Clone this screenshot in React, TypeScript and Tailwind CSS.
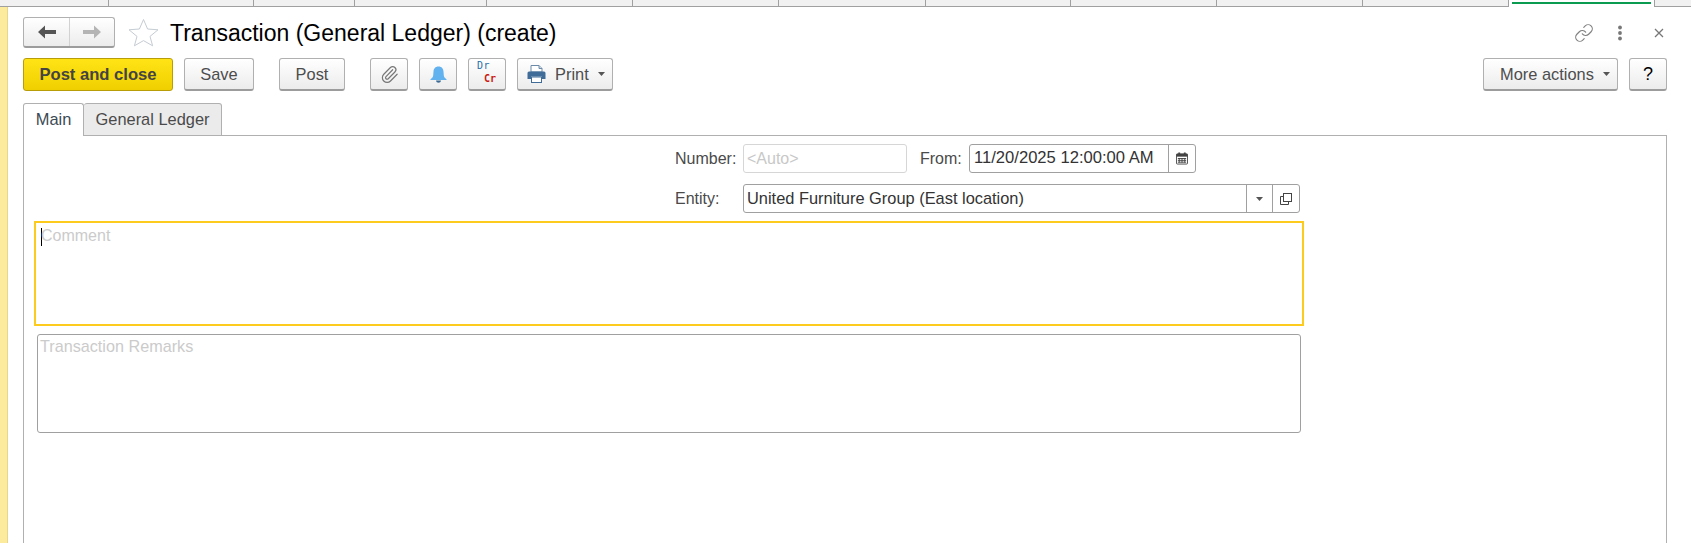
import React from "react";
import { Link, Paperclip } from "lucide-react";

const tabWidths = [109, 145, 101, 132, 146, 146, 147, 145, 146, 146, 146];
const btn =
  "h-[33px] flex items-center justify-center rounded-[3px] border border-[#b0b0b0] border-b-[#9c9c9c] border-b-2 bg-gradient-to-b from-white to-[#ececec] text-[16.4px] text-[#4d4d4d]";

function Caret() {
  return (
    <svg width="7" height="4" viewBox="0 0 7 4" className="shrink-0">
      <polygon points="0,0 7,0 3.5,4" fill="#555" />
    </svg>
  );
}

export default function App() {
  return (
    <div className="w-[1691px] h-[543px] overflow-hidden bg-white flex flex-col text-[16px] leading-none text-[#4a4a4a] [font-family:'Liberation_Sans',Arial,sans-serif]">
      <div className="h-[7px] shrink-0 flex border-b border-[#a0a0a0] bg-[#f1f1f1]">
        {tabWidths.map((w, i) => (
          <div key={i} style={{ width: w }} className="h-[6px] shrink-0 border-r border-[#a0a0a0]" />
        ))}
        <div className="w-[146px] h-[7px] shrink-0 bg-white border-r border-[#a0a0a0] px-[3px] pt-[2px]">
          <div className="h-[2px] bg-[#0a9a50]" />
        </div>
      </div>

      <div className="flex-1 flex min-h-0">
        <div className="w-[8px] shrink-0 bg-[#fdeb9d] border-r border-[#e8d68a]" />
        <div className="flex-1 flex flex-col pl-[15px] pr-[24px] pt-[10px] min-w-0">
          <div className="h-[31px] flex items-center shrink-0">
            <div className="w-[92px] h-[31px] flex rounded-[3px] border border-[#b0b0b0] border-b-2 border-b-[#9c9c9c] bg-gradient-to-b from-white to-[#ececec]">
              <div className="w-[46px] flex items-center justify-center border-r border-[#d2d2d2]">
                <svg width="18" height="14" viewBox="0 0 18 14">
                  <polygon points="0,7 7,0.5 7,5 18,5 18,9 7,9 7,13.5" fill="#555" />
                </svg>
              </div>
              <div className="flex-1 flex items-center justify-center">
                <svg width="18" height="14" viewBox="0 0 18 14">
                  <polygon points="18,7 11,0.5 11,5 0,5 0,9 11,9 11,13.5" fill="#b4b4b4" />
                </svg>
              </div>
            </div>
            <svg width="31" height="29" viewBox="0 0 31 29" className="ml-[13px]">
              <polygon
                points="15.5,1.5 19.6,11 30,11.8 22,18.4 24.6,27.8 15.5,22.6 6.4,27.8 9,18.4 1,11.8 11.4,11"
                fill="none"
                stroke="#c5ccd2"
              />
            </svg>
            <div className="ml-[11px] pt-[2px] text-[23px] text-black">Transaction (General Ledger) (create)</div>
            <div className="ml-auto flex items-center text-[#777]">
              <Link size={20} strokeWidth={1.4} className="text-[#808080]" />
              <svg width="6" height="16" viewBox="0 0 6 16" className="ml-[23px]">
                <circle cx="3" cy="2.5" r="1.9" fill="#777" />
                <circle cx="3" cy="8" r="1.9" fill="#777" />
                <circle cx="3" cy="13.5" r="1.9" fill="#777" />
              </svg>
              <svg width="10" height="10" viewBox="0 0 10 10" className="ml-[31px] mr-[3px]">
                <path d="M1 1 L9 9 M9 1 L1 9" stroke="#777" strokeWidth="1.3" />
              </svg>
            </div>
          </div>

          <div className="mt-[10px] flex items-center shrink-0">
            <div className="w-[150px] h-[33px] flex items-center justify-center rounded-[3px] border border-[#b89c08] pt-px bg-gradient-to-b from-[#ffe414] to-[#f0cf00] font-bold text-[16.6px] text-[#444]">
              Post and close
            </div>
            <div className={`${btn} w-[70px] ml-[11px]`}>Save</div>
            <div className={`${btn} w-[66px] ml-[25px]`}>Post</div>
            <div className={`${btn} w-[38px] ml-[25px]`}>
              <Paperclip size={19} strokeWidth={1.5} className="text-[#777]" />
            </div>
            <div className={`${btn} w-[38px] ml-[11px]`}>
              <svg width="17" height="17" viewBox="0 0 17 17">
                <path
                  d="M8.5 0.5 C11.8 0.5 13.3 2.8 13.5 5.5 L13.8 9.5 C14 11.3 15.3 12.3 16.5 13.3 L16.5 14 L0.5 14 L0.5 13.3 C1.7 12.3 3 11.3 3.2 9.5 L3.5 5.5 C3.7 2.8 5.2 0.5 8.5 0.5 Z"
                  fill="#62b2f0"
                />
                <path d="M6 14.5 L11 14.5 C10.8 16 9.7 16.7 8.5 16.7 C7.3 16.7 6.2 16 6 14.5 Z" fill="#3c6a94" />
              </svg>
            </div>
            <div className={`${btn} w-[38px] ml-[11px] flex-col items-stretch`}>
              <div className="text-[10px] leading-[10px] pl-[8px] -mt-[4px] tracking-[0.5px] text-[#2b6ea6] [font-family:'DejaVu_Sans_Mono',monospace]">Dr</div>
              <div className="text-[10px] font-bold leading-[10px] pl-[15px] mt-[3px] text-[#cc1a10] [font-family:'DejaVu_Sans_Mono',monospace]">Cr</div>
            </div>
            <div className={`${btn} w-[96px] ml-[11px] !justify-start pl-[9px]`}>
              <svg width="19" height="18" viewBox="0 0 19 18">
                <path d="M4 7 V0.5 H12 L15 3.5 V7 Z" fill="#fff" stroke="#6b8aa8" />
                <path d="M12 0.5 V3.5 H15" fill="#cdd9e4" stroke="#6b8aa8" />
                <path d="M2 6.5 H17 Q18.5 6.5 18.5 8 V14 H15 V11.5 H4 V14 H0.5 V8 Q0.5 6.5 2 6.5 Z" fill="#3f6c98" />
                <rect x="4.5" y="12" width="10" height="5.5" fill="#fff" stroke="#3f6c98" />
              </svg>
              <span className="ml-[9px]">Print</span>
              <span className="ml-[9px]"><Caret /></span>
            </div>
            <div className={`${btn} w-[135px] ml-auto pl-[9px]`}>
              More actions
              <span className="ml-[9px]"><Caret /></span>
            </div>
            <div className={`${btn} w-[38px] ml-[11px] !text-[18px] text-black`}>?</div>
          </div>

          <div className="mt-[12px] flex items-end h-[33px] shrink-0 -mb-px relative">
            <div className="w-[61px] h-[33px] flex items-center justify-center rounded-t-[3px] border border-b-0 border-[#b0b0b0] bg-white text-[16.4px] text-[#3c4a55] pb-[2px]">
              Main
            </div>
            <div className="w-[138px] h-[33px] flex items-center justify-center rounded-t-[3px] border border-l-0 border-[#b0b0b0] bg-[#ebebeb] text-[16.4px] text-[#4a4a4a] pb-px">
              General Ledger
            </div>
          </div>

          <div className="flex-1 border border-b-0 border-[#b0b0b0] pl-[10px] pt-[8px]">
            <div className="h-[29px] flex items-center">
              <div className="w-[709px] shrink-0 pl-[641px]">Number:</div>
              <div className="w-[164px] h-[29px] shrink-0 flex items-center rounded-[3px] border border-[#d6d6d6] pl-[3px] text-[#c8c8c8]">
                &lt;Auto&gt;
              </div>
              <div className="ml-[13px] w-[49px]">From:</div>
              <div className="w-[227px] h-[29px] flex rounded-[3px] border border-[#a0a0a0] text-[#333]">
                <div className="w-[199px] flex items-center pl-[4px] border-r border-[#a0a0a0] whitespace-nowrap text-[16.6px]">11/20/2025 12:00:00 AM</div>
                <div className="flex-1 flex items-center justify-center">
                  <svg width="12" height="13" viewBox="0 0 13 13">
                    <path d="M1.5 1.5 H11.5 Q12.5 1.5 12.5 2.5 V11.5 Q12.5 12.5 11.5 12.5 H1.5 Q0.5 12.5 0.5 11.5 V2.5 Q0.5 1.5 1.5 1.5 Z" fill="none" stroke="#444" />
                    <rect x="0.5" y="1.5" width="12" height="3" fill="#444" />
                    <rect x="2.5" y="0" width="2" height="3" fill="#444" />
                    <rect x="8.5" y="0" width="2" height="3" fill="#444" />
                    <path d="M2 6.5 H11 M2 8.5 H11 M2 10.5 H11 M3.5 6 V11 M6.5 6 V11 M9.5 6 V11" stroke="#444" strokeWidth="1" />
                  </svg>
                </div>
              </div>
            </div>

            <div className="mt-[11px] h-[29px] flex items-center">
              <div className="w-[709px] shrink-0 pl-[641px]">Entity:</div>
              <div className="w-[557px] h-[29px] flex rounded-[3px] border border-[#a0a0a0] text-[#333]">
                <div className="w-[503px] flex items-center pl-[3px] border-r border-[#a0a0a0] text-[16.4px]">United Furniture Group (East location)</div>
                <div className="w-[26px] flex items-center justify-center border-r border-[#a0a0a0]">
                  <Caret />
                </div>
                <div className="flex-1 flex items-center justify-center">
                  <svg width="12" height="12" viewBox="0 0 12 12">
                    <rect x="3.5" y="0.5" width="8" height="8" fill="none" stroke="#444" />
                    <path d="M3.5 3.5 H0.5 V11.5 H8.5 V8.5" fill="none" stroke="#444" />
                  </svg>
                </div>
              </div>
            </div>

            <div className="mt-[8px] w-[1270px] h-[105px] border-2 border-[#fdcb1e] pl-[5px] pt-[4px] flex text-[#cbcbcb]">
              <div className="w-px h-[18px] -mr-px mt-px bg-black" />
              <span className="leading-[18px]">Comment</span>
            </div>

            <div className="mt-[8px] ml-[3px] w-[1264px] h-[99px] rounded-[3px] border border-[#a0a0a0] pl-[2px] pt-[2px] text-[16.2px] text-[#cbcbcb] leading-[18px]">
              Transaction Remarks
            </div>
          </div>
        </div>
      </div>
    </div>
  );
}
